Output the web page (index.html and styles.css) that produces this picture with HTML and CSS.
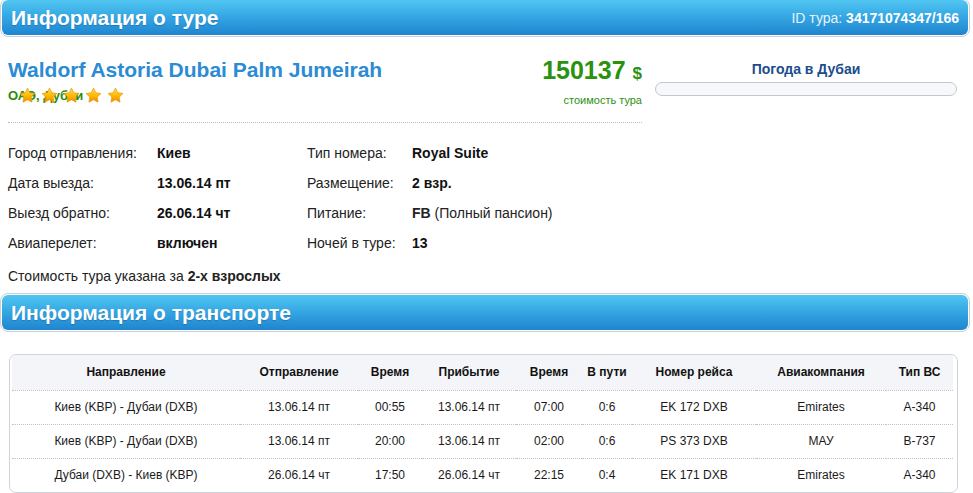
FILE: index.html
```html
<!DOCTYPE html>
<html>

<head>
    <meta charset="utf-8">
    <title>Информация о туре</title>
    <link rel="stylesheet" href="styles.css">
</head>

<body>
    <svg width="0" height="0" class="defs">
        <defs>
            <linearGradient id="starFill" x1="0" y1="0" x2="0" y2="1">
                <stop offset="0" stop-color="#ffe066" />
                <stop offset="0.55" stop-color="#ffb800" />
                <stop offset="1" stop-color="#f08c00" />
            </linearGradient>
            <symbol id="star" viewBox="0 0 20 20">
                <path d="M10 1.2l2.7 5.6 6.1.8-4.5 4.2 1.1 6L10 14.9l-5.4 2.9 1.1-6L1.2 7.6l6.1-.8z" fill="url(#starFill)" stroke="#e69500" stroke-width="0.8" stroke-linejoin="round" />
            </symbol>
        </defs>
    </svg>

    <div class="page">
        <div class="bar bar-top">
            <div class="bar-in">
                <h2>Информация о туре</h2>
                <div class="tour-id">ID тура: <b>34171074347/166</b></div>
            </div>
        </div>

        <div class="summary">
            <div class="summary-main">
                <div class="hotel">
                    <div class="hotel-name">
                        <h1>Waldorf Astoria Dubai Palm Jumeirah</h1>
                        <div class="place">
                            ОАЭ, Дубаи
                            <span class="stars">
                                <svg><use href="#star" /></svg>
                                <svg><use href="#star" /></svg>
                                <svg><use href="#star" /></svg>
                                <svg><use href="#star" /></svg>
                                <svg><use href="#star" /></svg>
                            </span>
                        </div>
                    </div>
                    <div class="price">
                        <div class="price-sum">150137 <span class="cur">$</span></div>
                        <div class="price-note">стоимость тура</div>
                    </div>
                </div>
            </div>
            <div class="weather">
                <div class="weather-title">Погода в Дубаи</div>
                <div class="weather-box"></div>
            </div>
        </div>

        <div class="details">
            <span>Город отправления:</span><b>Киев</b>
            <span>Тип номера:</span><b>Royal Suite</b>
            <span>Дата выезда:</span><b>13.06.14 пт</b>
            <span>Размещение:</span><b>2 взр.</b>
            <span>Выезд обратно:</span><b>26.06.14 чт</b>
            <span>Питание:</span><span><b>FB</b> (Полный пансион)</span>
            <span>Авиаперелет:</span><b>включен</b>
            <span>Ночей в туре:</span><b>13</b>
        </div>
        <p class="note">Стоимость тура указана за <b>2-х взрослых</b></p>

        <div class="bar">
            <div class="bar-in">
                <h2>Информация о транспорте</h2>
            </div>
        </div>

        <div class="flights">
            <table>
                <colgroup>
                    <col style="width:228px">
                    <col style="width:118px">
                    <col style="width:64px">
                    <col style="width:94px">
                    <col style="width:66px">
                    <col style="width:50px">
                    <col style="width:124px">
                    <col style="width:130px">
                    <col>
                </colgroup>
                <thead>
                    <tr>
                        <th>Направление</th>
                        <th>Отправление</th>
                        <th>Время</th>
                        <th>Прибытие</th>
                        <th>Время</th>
                        <th>В пути</th>
                        <th>Номер рейса</th>
                        <th>Авиакомпания</th>
                        <th>Тип ВС</th>
                    </tr>
                </thead>
                <tbody>
                    <tr>
                        <td>Киев (KBP) - Дубаи (DXB)</td>
                        <td>13.06.14 пт</td>
                        <td>00:55</td>
                        <td>13.06.14 пт</td>
                        <td>07:00</td>
                        <td>0:6</td>
                        <td>EK 172 DXB</td>
                        <td>Emirates</td>
                        <td>A-340</td>
                    </tr>
                    <tr>
                        <td>Киев (KBP) - Дубаи (DXB)</td>
                        <td>13.06.14 пт</td>
                        <td>20:00</td>
                        <td>13.06.14 пт</td>
                        <td>02:00</td>
                        <td>0:6</td>
                        <td>PS 373 DXB</td>
                        <td>МАУ</td>
                        <td>B-737</td>
                    </tr>
                    <tr>
                        <td>Дубаи (DXB) - Киев (KBP)</td>
                        <td>26.06.14 чт</td>
                        <td>17:50</td>
                        <td>26.06.14 чт</td>
                        <td>22:15</td>
                        <td>0:4</td>
                        <td>EK 171 DXB</td>
                        <td>Emirates</td>
                        <td>A-340</td>
                    </tr>
                </tbody>
            </table>
        </div>
    </div>
</body>

</html>
```

FILE: styles.css
```css
* {
    box-sizing: border-box;
    margin: 0;
    padding: 0;
}

body {
    background-color: #fff;
    color: #111;
    font-family: "Liberation Sans", Arial, sans-serif;
    font-size: 14px;
}

.defs {
    position: absolute;
}

.page {
    width: 970px;
    margin-top: -2px;
}

/* blue section headers */
.bar {
    border: 1px solid #c9cfd6;
    border-radius: 8px;
    padding: 1px;
}

.bar-in {
    align-items: center;
    background: linear-gradient(to bottom, #52c6f2 0%, #36a8e4 45%, #1f85cf 100%);
    border-radius: 6px;
    color: #fff;
    display: flex;
    height: 35px;
    justify-content: space-between;
    padding: 0 9px 0 9px;
}

.bar-in h2 {
    font-size: 21px;
    font-weight: bold;
    text-shadow: 0 1px 1px rgba(0, 40, 90, 0.25);
}

.tour-id {
    color: #e6f3fb;
    font-size: 14px;
}

.tour-id b {
    color: #fff;
}

/* hotel, price and weather */
.summary {
    display: flex;
    padding: 20px 0 0 8px;
}

.summary-main {
    border-bottom: 1px dotted #bbb;
    width: 634px;
    height: 66px;
}

.hotel {
    display: flex;
    justify-content: space-between;
}

.hotel-name h1 {
    color: #2b8bd3;
    font-size: 21px;
    line-height: 26px;
}

.place {
    color: #2a8c0a;
    font-size: 13px;
    font-weight: bold;
    margin-top: 5px;
    position: relative;
}

.stars {
    display: flex;
    gap: 5px;
    left: 11px;
    position: absolute;
    top: -1px;
}

.stars svg {
    height: 17px;
    width: 17px;
}

.price {
    color: #2a920f;
    text-align: right;
}

.price-sum {
    font-size: 25px;
    font-weight: bold;
    line-height: 26px;
}

.price-sum .cur {
    font-size: 17px;
}

.price-note {
    font-size: 11px;
    margin-top: 7px;
}

.weather {
    margin-left: 13px;
    padding-top: 4px;
    text-align: center;
    width: 302px;
}

.weather-title {
    color: #1b4d8c;
    font-size: 14px;
    font-weight: bold;
}

.weather-box {
    background-color: #f7f8fb;
    border: 1px solid #c4c7cc;
    border-radius: 7px;
    height: 14px;
    margin-top: 5px;
}

/* tour details */
.details {
    display: grid;
    grid-template-columns: 149px 150px 105px auto;
    grid-auto-rows: 30px;
    align-items: center;
    padding: 15px 0 0 8px;
}

.details span {
    color: #222;
}

.note {
    color: #222;
    line-height: 30px;
    margin-bottom: 2px;
    padding: 3px 0 0 8px;
}

/* flights table */
.flights {
    border: 1px solid #cfd2d6;
    border-radius: 7px;
    margin: 22px 0 0 9px;
    overflow: hidden;
    padding: 0 4px 0 2px;
    width: 949px;
}

.flights table {
    border-collapse: collapse;
    font-size: 12px;
    table-layout: fixed;
    width: 100%;
}

.flights thead {
    background-color: #f4f5f8;
}

.flights th {
    border-bottom: 1px dotted #c3c3c3;
    color: #111;
    font-weight: bold;
    height: 35px;
    text-align: center;
}

.flights td {
    color: #1a1a1a;
    height: 34px;
    text-align: center;
}

.flights tbody tr + tr td {
    border-top: 1px dotted #c3c3c3;
}
```
